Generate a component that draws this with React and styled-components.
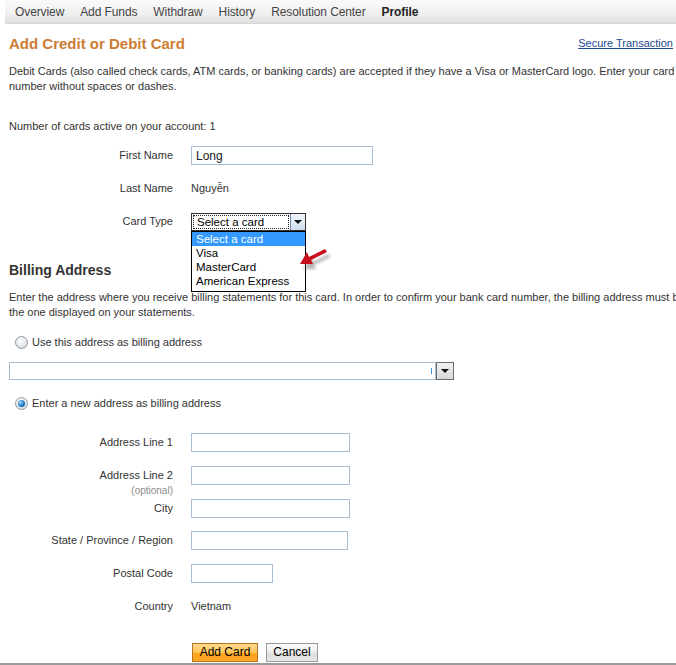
import React from 'react'
import styled, { createGlobalStyle } from 'styled-components'

const GlobalStyle = createGlobalStyle`
  body {
    margin: 0;
    overflow: hidden;
    background: #fff;
    font-family: "Liberation Sans", Arial, sans-serif;
    color: #333;
  }
`

const Page = styled.div`
  width: 720px;
  height: 665px;
  position: relative;
`

const Nav = styled.ul`
  display: flex;
  align-items: center;
  gap: 16px;
  height: 24px;
  margin: 0 0 0 5px;
  padding: 0 0 0 10px;
  list-style: none;
  background: linear-gradient(#fafafa, #f0f0f0 60%, #dedede);
  border-bottom: 1px solid #d6d6d6;
  box-sizing: border-box;
`

const NavItem = styled.li`
  font-size: 12px;
  letter-spacing: -0.1px;
  color: ${p => (p.$active ? '#222' : '#444')};
  font-weight: ${p => (p.$active ? 'bold' : 'normal')};
`

const Content = styled.div`
  padding-left: 9px;
  width: 680px;
`

const Header = styled.div`
  display: flex;
  justify-content: space-between;
  align-items: center;
  width: 664px;
  margin-top: 10px;
  height: 18px;
`

const Title = styled.h1`
  margin: 0;
  font-size: 15px;
  font-weight: bold;
  color: #cd7d33;
`

const SecureLink = styled.a`
  font-size: 11px;
  color: #1c4a8f;
  text-decoration: underline;
`

const Text = styled.p`
  margin: ${p => p.$mt || 0}px 0 0;
  font-size: 11px;
  line-height: 15px;
  color: #333;
`

const Form = styled.div`
  margin-top: ${p => p.$mt || 0}px;
`

const Row = styled.div`
  display: flex;
  align-items: flex-start;
  height: ${p => p.$h || 33}px;
`

const Label = styled.div`
  width: 164px;
  margin-right: 18px;
  padding-top: 2px;
  text-align: right;
  font-size: 11px;
  line-height: 14px;
  color: #333;
`

const Optional = styled.div`
  margin-top: 2px;
  font-size: 10px;
  color: #8a8a8a;
`

const Value = styled.div`
  padding-top: 2px;
  font-size: 11px;
  line-height: 14px;
  color: #333;
`

const Input = styled.div`
  width: ${p => p.$w}px;
  height: 19px;
  box-sizing: border-box;
  border: 1px solid #a9bcd4;
  padding: 2px 4px;
  font-size: 12px;
  line-height: 14px;
  color: #222;
  background: #fff;
`

const SelectWrap = styled.div`
  position: relative;
  margin-top: 1px;
`

const Select = styled.div`
  display: flex;
  width: 115px;
  height: 18px;
  box-sizing: border-box;
  border: 1px solid #333;
  background: #fff;
`

const SelectText = styled.div`
  flex: 1;
  margin: 1px;
  border: 1px dotted #222;
  padding-left: 3px;
  font-size: 11.5px;
  line-height: 12px;
  color: #000;
`

const ArrowBtn = styled.div`
  width: 15px;
  display: flex;
  align-items: center;
  justify-content: center;
  border-left: 1px solid #7b8ea8;
  background: ${p => (p.$gray ? 'linear-gradient(#f2f2f2, #d8d8d8)' : 'linear-gradient(#f1f6fc, #cfdcee)')};
  box-sizing: border-box;

  &::after {
    content: "";
    border-left: 4px solid transparent;
    border-right: 4px solid transparent;
    border-top: 4px solid #111;
  }
`

const List = styled.ul`
  position: absolute;
  top: 18px;
  left: 0;
  width: 115px;
  margin: 0;
  padding: 0 0 3px;
  list-style: none;
  box-sizing: border-box;
  border: 1px solid #000;
  background: #fff;
  z-index: 2;
`

const Option = styled.li`
  height: 14px;
  padding-left: 4px;
  font-size: 11.5px;
  line-height: 14px;
  color: ${p => (p.$selected ? '#fff' : '#000')};
  background: ${p => (p.$selected ? '#3399ff' : 'transparent')};
`

const Pointer = styled.svg`
  position: absolute;
  left: 105px;
  top: 32px;
  z-index: 3;
`

const SectionTitle = styled.h2`
  margin: 17px 0 0;
  font-size: 14px;
  line-height: 17px;
  font-weight: bold;
  color: #333;
`

const RadioRow = styled.label`
  display: flex;
  align-items: center;
  gap: 4px;
  margin: ${p => p.$mt}px 0 0 6px;
  height: 16px;
  font-size: 11px;
  color: #333;
`

const Radio = styled.span`
  width: 11px;
  height: 11px;
  border-radius: 50%;
  border: 1px solid #8f9aa6;
  background: radial-gradient(circle at 40% 35%, #ffffff, #cfd4d9);
  display: flex;
  align-items: center;
  justify-content: center;

  &::after {
    content: "";
    display: ${p => (p.$checked ? 'block' : 'none')};
    width: 7px;
    height: 7px;
    border-radius: 50%;
    background: radial-gradient(circle at 35% 35%, #9ad8ff, #1a73c0 60%, #0b4f8e);
  }
`

const WideSelect = styled.div`
  display: flex;
  margin-top: 12px;
  height: 18px;
`

const WideField = styled.div`
  width: 427px;
  box-sizing: border-box;
  border: 1px solid #a9bcd4;
  position: relative;

  &::after {
    content: "";
    position: absolute;
    right: 3px;
    top: 5px;
    width: 1px;
    height: 6px;
    background: #3b8fdc;
  }
`

const WideBtn = styled(ArrowBtn)`
  width: 18px;
  border: 1px solid #6c6c6c;
`

const Buttons = styled.div`
  display: flex;
  gap: 8px;
  margin: 13px 0 0 183px;
`

const Button = styled.button`
  width: ${p => p.$w}px;
  height: 19px;
  padding: 0;
  font-family: "Liberation Sans", Arial, sans-serif;
  font-size: 12px;
  line-height: 15px;
  color: #000;
  border: 1px solid ${p => (p.$primary ? '#b7741c' : '#9a9a9a')};
  background: ${p =>
    p.$primary
      ? 'linear-gradient(#ffd88c, #ffc659 50%, #ffa41c 51%, #ffa826)'
      : 'linear-gradient(#fafafa, #ececec 50%, #dedede 51%, #e6e6e6)'};
`

const BottomLine = styled.div`
  position: absolute;
  left: 0;
  right: 0;
  bottom: 0;
  height: 2px;
  background: #9a9a9a;
`

const navItems = ['Overview', 'Add Funds', 'Withdraw', 'History', 'Resolution Center', 'Profile']

const address = [
  { label: 'Address Line 1', w: 159 },
  { label: 'Address Line 2', w: 159, optional: true },
  { label: 'City', w: 159, h: 32 },
  { label: 'State / Province / Region', w: 157 },
  { label: 'Postal Code', w: 82 },
]

export default function App() {
  return (
    <Page>
      <GlobalStyle />
      <Nav>
        {navItems.map(item => (
          <NavItem key={item} $active={item === 'Profile'}>{item}</NavItem>
        ))}
      </Nav>
      <Content>
        <Header>
          <Title>Add Credit or Debit Card</Title>
          <SecureLink href="#">Secure Transaction</SecureLink>
        </Header>
        <Text $mt={12}>
          Debit Cards (also called check cards, ATM cards, or banking cards) are accepted if they have a Visa or MasterCard logo. Enter your card number without spaces or dashes.
        </Text>
        <Text $mt={25}>Number of cards active on your account: 1</Text>

        <Form $mt={12}>
          <Row>
            <Label>First Name</Label>
            <Input $w={182}>Long</Input>
          </Row>
          <Row>
            <Label>Last Name</Label>
            <Value>Nguyễn</Value>
          </Row>
          <Row>
            <Label>Card Type</Label>
            <SelectWrap>
              <Select>
                <SelectText>Select a card</SelectText>
                <ArrowBtn />
              </Select>
              <List>
                <Option $selected>Select a card</Option>
                <Option>Visa</Option>
                <Option>MasterCard</Option>
                <Option>American Express</Option>
              </List>
              <Pointer width="40" height="30" viewBox="0 0 40 30">
                <defs>
                  <filter id="sh" x="-50%" y="-50%" width="200%" height="200%">
                    <feGaussianBlur stdDeviation="1.6" />
                  </filter>
                </defs>
                <g transform="translate(3 4)" fill="#777" opacity="0.55" filter="url(#sh)">
                  <path d="M4 20 L12 8 L14 13 L30 5 L31 8 L15 16 L17 20 Z" />
                </g>
                <path d="M4 19 L11 7 L13 12 L29 4 L31 7 L15 15 L17 19 Z" fill="#c8101c" />
              </Pointer>
            </SelectWrap>
          </Row>
        </Form>

        <SectionTitle>Billing Address</SectionTitle>
        <Text $mt={11}>
          Enter the address where you receive billing statements for this card. In order to confirm your bank card number, the billing address must be the one displayed on your statements.
        </Text>

        <RadioRow $mt={14}>
          <Radio />
          Use this address as billing address
        </RadioRow>
        <WideSelect>
          <WideField />
          <WideBtn $gray />
        </WideSelect>
        <RadioRow $mt={15}>
          <Radio $checked />
          Enter a new address as billing address
        </RadioRow>

        <Form $mt={22}>
          {address.map(a => (
            <Row key={a.label} $h={a.h}>
              <Label>
                {a.label}
                {a.optional && <Optional>(optional)</Optional>}
              </Label>
              <Input $w={a.w} />
            </Row>
          ))}
          <Row>
            <Label>Country</Label>
            <Value>Vietnam</Value>
          </Row>
        </Form>

        <Buttons>
          <Button $primary $w={66}>Add Card</Button>
          <Button $w={52}>Cancel</Button>
        </Buttons>
      </Content>
      <BottomLine />
    </Page>
  )
}
